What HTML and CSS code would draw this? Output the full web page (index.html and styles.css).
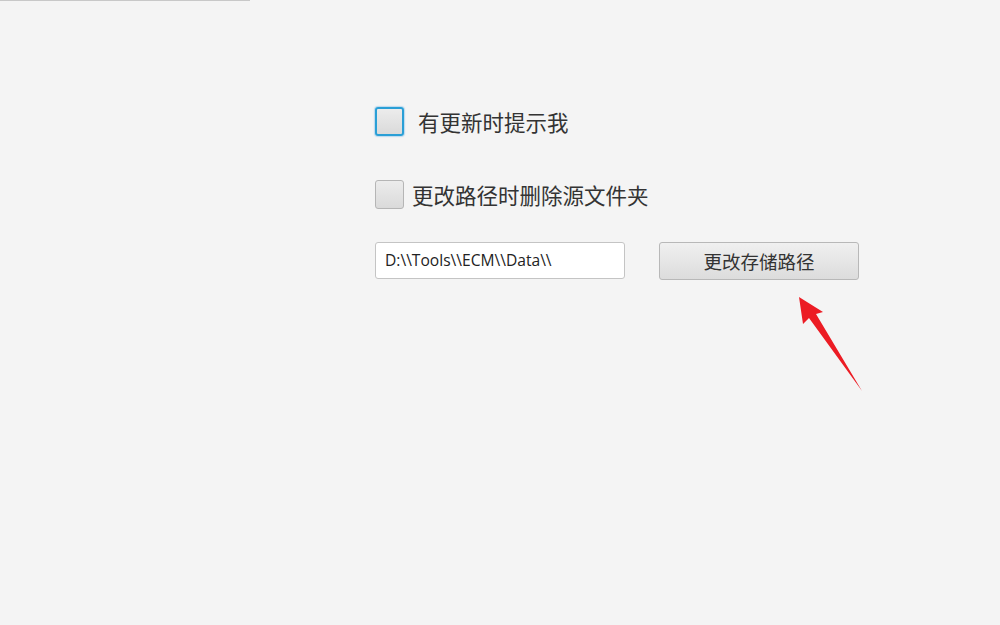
FILE: index.html
```html
<!DOCTYPE html>
<html lang="zh">
<head>
<meta charset="utf-8">
<link rel="stylesheet" href="styles.css">
</head>
<body>
<div class="topline"></div>
<main class="panel">
  <label class="check-row first">
    <span class="box focused"></span>
    <span class="check-text">有更新时提示我</span>
  </label>
  <label class="check-row second">
    <span class="box"></span>
    <span class="check-text">更改路径时删除源文件夹</span>
  </label>
  <div class="path-row">
    <div class="field">D:\\Tools\\ECM\\Data\\</div>
    <div class="btn-wrap">
      <button class="btn">更改存储路径</button>
      <svg class="arrow" width="80" height="110" viewBox="0 0 80 110">
        <polygon points="0,0 24,15 17,17 63,94 10,21 4,27" fill="#ec1c24"/>
      </svg>
    </div>
  </div>
</main>
</body>
</html>
```
FILE: styles.css
```css
html, body {
  margin: 0;
  padding: 0;
  background: #f4f4f4;
  width: 1000px;
  height: 625px;
  overflow: hidden;
  font-family: "Segoe UI", "Open Sans", "Noto Sans CJK SC", sans-serif;
  color: #333333;
}
.topline {
  width: 250px;
  height: 1px;
  background: #c8c8c8;
}
.panel {
  padding: 106px 0 0 375px;
  display: flex;
  flex-direction: column;
}
.check-row {
  display: flex;
  align-items: center;
  height: 29px;
}
.check-row.second {
  margin-top: 44px;
}
.box {
  box-sizing: border-box;
  width: 29px;
  height: 29px;
  border: 1px solid #b5b5b5;
  border-radius: 3px;
  background: linear-gradient(#ececec, #dadada);
  flex: none;
}
.box.focused {
  border: 2px solid #2a9fd6;
  box-shadow: 0 0 1px 1px rgba(80, 170, 230, 0.35);
}
.check-text {
  font-family: "Noto Sans CJK SC", sans-serif;
  font-size: 21.5px;
  line-height: 29px;
  color: #333333;
}
.first .check-text { margin-left: 14px; }
.second .check-text { margin-left: 8px; }
.path-row {
  margin-top: 33px;
  display: flex;
  align-items: flex-start;
}
.field {
  box-sizing: border-box;
  width: 250px;
  height: 37px;
  background: #ffffff;
  border: 1px solid #c4c4c4;
  border-radius: 3px;
  padding: 0 9px;
  font-family: "Open Sans", sans-serif;
  font-size: 15.6px;
  line-height: 35px;
  color: #222222;
}
.btn-wrap {
  position: relative;
  margin-left: 34px;
}
.btn {
  box-sizing: border-box;
  width: 200px;
  height: 38px;
  border: 1px solid #b8b8b8;
  border-radius: 3px;
  background: linear-gradient(#f0f0f0, #dcdcdc);
  font-family: "Noto Sans CJK SC", sans-serif;
  font-size: 18.5px;
  color: #333333;
  padding: 0;
  display: block;
}
.arrow {
  position: absolute;
  left: 140px;
  top: 55px;
}
```
